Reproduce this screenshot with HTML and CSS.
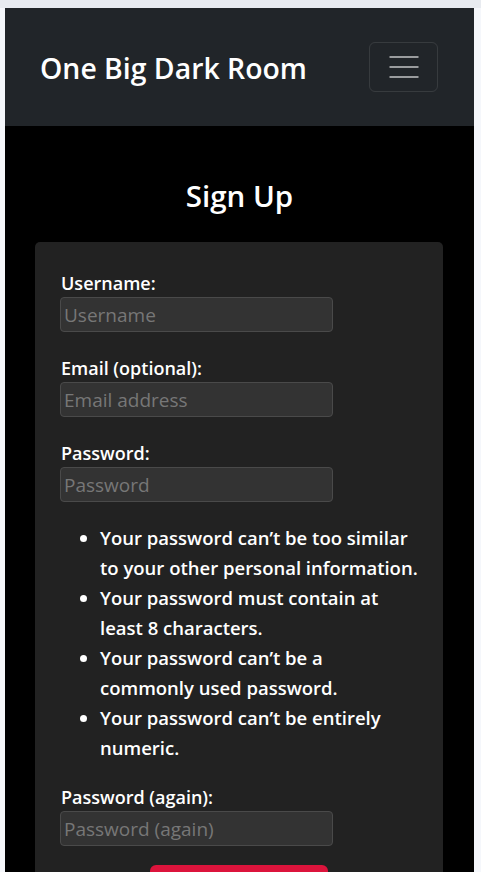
FILE: index.html
```html
<!DOCTYPE html>
<html lang="en">
<head>
<meta charset="utf-8">
<title>Sign Up - One Big Dark Room</title>
<link rel="stylesheet" href="styles.css">
</head>
<body>
<div class="page">
  <nav class="navbar">
    <a class="brand" href="#">One Big Dark Room</a>
    <button class="toggler" type="button" aria-label="Toggle navigation">
      <svg width="30" height="30" viewBox="0 0 30 30" aria-hidden="true">
        <path d="M0.5 5h29M0.5 15h29M0.5 25h29" stroke="rgba(255,255,255,0.55)" stroke-width="2" stroke-linecap="butt"/>
      </svg>
    </button>
  </nav>
  <main class="main">
    <h1 class="title">Sign Up</h1>
    <div class="card">
      <form class="form">
        <div class="field">
          <label class="label" for="u">Username:</label>
          <input class="input" id="u" type="text" placeholder="Username">
        </div>
        <div class="field">
          <label class="label" for="e">Email (optional):</label>
          <input class="input" id="e" type="email" placeholder="Email address">
        </div>
        <div class="field">
          <label class="label" for="p">Password:</label>
          <input class="input" id="p" type="password" placeholder="Password">
        </div>
        <ul class="help">
          <li>Your password can’t be too similar to your other personal information.</li>
          <li>Your password must contain at least 8 characters.</li>
          <li>Your password can’t be a commonly used password.</li>
          <li>Your password can’t be entirely numeric.</li>
        </ul>
        <div class="field">
          <label class="label" for="p2">Password (again):</label>
          <input class="input" id="p2" type="password" placeholder="Password (again)">
        </div>
        <div class="actions">
          <button class="submit" type="submit">Sign Up</button>
        </div>
      </form>
    </div>
  </main>
</div>
</body>
</html>
```
FILE: styles.css
```css
html, body {
  margin: 0;
  padding: 0;
}
body {
  background: #f5f7fb;
  border-top: 8px solid #e8ebf0;
  padding: 0 7px 0 5px;
  font-family: "Open Sans", "Noto Sans", sans-serif;
  height: 864px;
  overflow: hidden;
}
.page {
  background: #000;
  min-height: 100%;
}
.navbar {
  background: #212529;
  height: 118px;
  box-sizing: border-box;
  padding: 0 36px 0 35px;
  display: flex;
  align-items: center;
  justify-content: space-between;
}
.brand {
  color: #fff;
  text-decoration: none;
  font-size: 28.4px;
  font-weight: 600;
  line-height: 1;
  margin-top: 3px;
}
.toggler {
  width: 69px;
  height: 50px;
  background: transparent;
  border: 1px solid rgba(255,255,255,0.1);
  border-radius: 6px;
  display: flex;
  align-items: center;
  justify-content: center;
  padding: 0;
  margin-top: -1px;
}
.toggler svg {
  display: block;
}
.main {
  padding: 52px 0 40px;
}
.title {
  margin: 0;
  color: #fff;
  text-align: center;
  font-size: 29.5px;
  line-height: 36px;
  font-weight: 600;
}
.card {
  margin: 28px 31px 0 30px;
  background: #222;
  border-radius: 5px;
  padding: 28px 26px 30px;
}
.form {
  display: flex;
  flex-direction: column;
}
.field {
  display: flex;
  flex-direction: column;
  align-items: flex-start;
  margin-bottom: 23px;
}
.label {
  color: #fff;
  font-size: 18px;
  font-weight: 600;
  line-height: 27px;
}
.input {
  width: 273px;
  height: 35px;
  box-sizing: border-box;
  background: #333;
  border: 1px solid #4a4a4a;
  border-radius: 4px;
  padding: 0 3px;
  color: #ddd;
  font-family: inherit;
  font-size: 19px;
  margin-left: -1px;
}
.input::placeholder {
  color: #777;
}
.help {
  margin: -2px -3px 21px 0;
  padding-left: 39px;
  color: #fff;
  font-size: 18.5px;
  font-weight: 600;
  line-height: 30px;
}
.actions {
  display: flex;
  justify-content: center;
  margin-top: -4px;
}
.submit {
  width: 178px;
  height: 44px;
  background: #dc143c;
  color: #fff;
  border: none;
  border-radius: 6px;
  font-family: inherit;
  font-size: 18px;
  font-weight: 600;
}
```
